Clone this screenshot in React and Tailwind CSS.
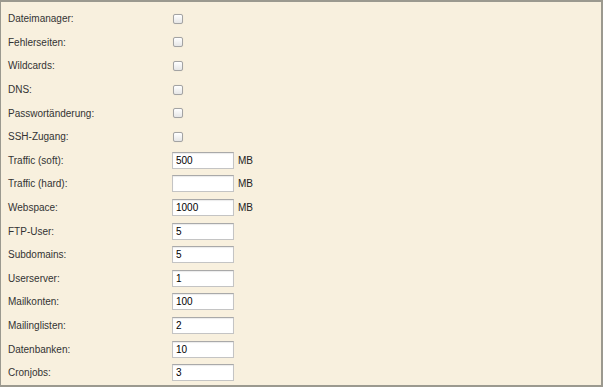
import React from "react";

const rows = [
  { label: "Dateimanager:", type: "check" },
  { label: "Fehlerseiten:", type: "check" },
  { label: "Wildcards:", type: "check" },
  { label: "DNS:", type: "check" },
  { label: "Passwortänderung:", type: "check" },
  { label: "SSH-Zugang:", type: "check" },
  { label: "Traffic (soft):", type: "text", value: "500", unit: "MB" },
  { label: "Traffic (hard):", type: "text", value: "", unit: "MB" },
  { label: "Webspace:", type: "text", value: "1000", unit: "MB" },
  { label: "FTP-User:", type: "text", value: "5" },
  { label: "Subdomains:", type: "text", value: "5" },
  { label: "Userserver:", type: "text", value: "1" },
  { label: "Mailkonten:", type: "text", value: "100" },
  { label: "Mailinglisten:", type: "text", value: "2" },
  { label: "Datenbanken:", type: "text", value: "10" },
  { label: "Cronjobs:", type: "text", value: "3" },
];

const App = () => {
  return (
    <div
      className="w-[604px] h-[388px] overflow-hidden bg-white"
      style={{ fontFamily: "'Liberation Sans', Arial, sans-serif" }}
    >
      <div className="w-[603px] h-[387px] border-t-2 border-l border-r-2 border-b-2 border-[#9b998f] bg-[#f8f0de] pt-[5px]">
        {rows.map((row) => (
          <div key={row.label} className="flex items-center h-[23.6px]">
            {/* Label */}
            <div className="w-[171px] pl-[7px] text-[10px] text-[#333]">{row.label}</div>

            {/* Field */}
            {row.type === "check" ? (
              <span className="ml-[1px] w-[10px] h-[10px] rounded-[2px] border border-[#a3a3a3] bg-gradient-to-b from-white to-[#e6e6e6] shadow-[0_0_1px_rgba(0,0,0,0.15)]" />
            ) : (
              <div className="flex items-center">
                <input
                  readOnly
                  value={row.value}
                  className="w-[62px] h-[17px] border border-[#c4c4c4] border-t-[#a9a9a9] bg-white px-[3px] text-[10px] text-black outline-none shadow-[inset_0_1px_1px_rgba(0,0,0,0.08)]"
                  style={{ fontFamily: "'Liberation Sans', Arial, sans-serif" }}
                />
                {row.unit && (
                  <span className="ml-[4px] text-[10px] text-[#222]">{row.unit}</span>
                )}
              </div>
            )}
          </div>
        ))}
      </div>
    </div>
  );
};

export default App;
